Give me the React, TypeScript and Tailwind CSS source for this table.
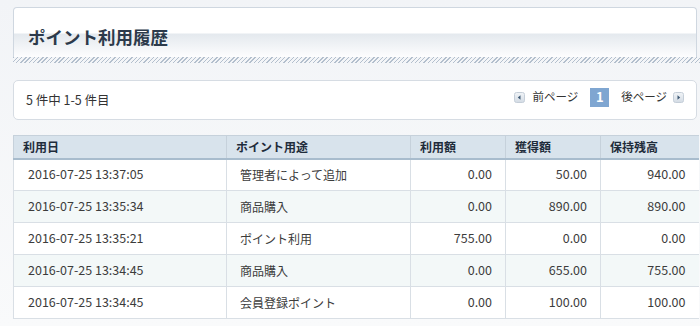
import React from 'react';

type Row = {
  date: string;
  usage: string;
  used: string;
  earned: string;
  balance: string;
};

const rows: Row[] = [
  { date: '2016-07-25 13:37:05', usage: '管理者によって追加', used: '0.00', earned: '50.00', balance: '940.00' },
  { date: '2016-07-25 13:35:34', usage: '商品購入', used: '0.00', earned: '890.00', balance: '890.00' },
  { date: '2016-07-25 13:35:21', usage: 'ポイント利用', used: '755.00', earned: '0.00', balance: '0.00' },
  { date: '2016-07-25 13:34:45', usage: '商品購入', used: '0.00', earned: '655.00', balance: '755.00' },
  { date: '2016-07-25 13:34:45', usage: '会員登録ポイント', used: '0.00', earned: '100.00', balance: '100.00' },
];

const ArrowButton = ({ dir }: { dir: 'left' | 'right' }) => (
  <svg width="11" height="11" viewBox="0 0 11 11" className="shrink-0">
    <defs>
      <linearGradient id={`ab-${dir}`} x1="0" y1="0" x2="0" y2="1">
        <stop offset="0" stopColor="#f1f4f7" />
        <stop offset="1" stopColor="#d3dbe4" />
      </linearGradient>
    </defs>
    <rect x="0.5" y="0.5" width="10" height="10" rx="2" fill={`url(#ab-${dir})`} stroke="#c5ced8" />
    {dir === 'left' ? (
      <path d="M6.5 3.2 L3.8 5.5 L6.5 7.8 Z" fill="#3d5873" />
    ) : (
      <path d="M4.5 3.2 L7.2 5.5 L4.5 7.8 Z" fill="#3d5873" />
    )}
  </svg>
);

const App = () => {
  return (
    <div
      className="w-[700px] h-[326px] overflow-hidden bg-[linear-gradient(to_bottom,#f2f4f7,#f9fafb)] pt-[7px] text-[#333]"
      style={{ fontFamily: '"Noto Sans CJK JP", "Noto Sans", sans-serif' }}
    >
      {/* title */}
      <div className="ml-[13px] mr-[3px] h-[50px] rounded-t-[4px] border border-b-0 border-[#cfd7e0] bg-[linear-gradient(to_bottom,#ffffff_0px,#ffffff_25px,#e4e9ee_26px,#fdfdfe_100%)] pl-[14px] pt-[18px]">
        <h2 className="text-[17.5px] font-bold leading-[22px] text-[#2c3a4b]">ポイント利用履歴</h2>
      </div>
      <div className="ml-[13px] h-[6px] bg-[repeating-linear-gradient(135deg,#b3bfcd_0px,#b3bfcd_1px,transparent_1px,transparent_3px)]" />

      {/* pager */}
      <div className="mt-[17px] ml-[13px] mr-[3px] flex h-[40px] items-center justify-between rounded-[5px] border border-[#d6dce3] bg-white pl-[12px] pr-[12px] text-[12px]">
        <span className="text-[12.5px] text-[#333]">5 件中 1-5 件目</span>
        <div className="flex items-center -mt-[6px]">
          <ArrowButton dir="left" />
          <span className="ml-[7px] text-[11.5px] text-[#333]">前ページ</span>
          <span className="ml-[12px] flex h-[19px] w-[19px] items-center justify-center bg-[#7fa6d1] text-[13px] font-bold text-white">1</span>
          <span className="ml-[12px] text-[11.5px] text-[#333]">後ページ</span>
          <span className="ml-[6px] flex">
            <ArrowButton dir="right" />
          </span>
        </div>
      </div>

      {/* table */}
      <table className="mt-[15px] ml-[13px] w-[685px] table-fixed border-collapse text-[12.5px]">
        <colgroup>
          <col className="w-[213px]" />
          <col className="w-[184px]" />
          <col className="w-[95px]" />
          <col className="w-[95px]" />
          <col className="w-[98px]" />
        </colgroup>
        <thead>
          <tr className="h-[23px] bg-[#d8e3ec] border-b-2 border-[#a8bccd] text-left text-[12px] text-[#1f2c3b]">
            <th className="border-l border-t border-[#c6d1db] pl-[9px] pt-[1px] font-bold">利用日</th>
            <th className="border-l border-t border-[#c6d1db] pl-[9px] pt-[1px] font-bold">ポイント用途</th>
            <th className="border-l border-t border-[#c6d1db] pl-[9px] pt-[1px] font-bold">利用額</th>
            <th className="border-l border-t border-[#c6d1db] pl-[9px] pt-[1px] font-bold">獲得額</th>
            <th className="border-l border-t border-[#c6d1db] pl-[9px] pt-[1px] font-bold">保持残高</th>
          </tr>
        </thead>
        <tbody className="text-[#3c3c3c]">
          {rows.map((row, i) => (
            <tr key={i} className={`h-[32px] ${i % 2 === 1 ? 'bg-[#f3f8f8]' : 'bg-white'}`}>
              <td className="border border-r-0 border-[#d9dfe5] pl-[14px]">{row.date}</td>
              <td className="border border-r-0 border-[#d9dfe5] pl-[13px] text-[12px]">{row.usage}</td>
              <td className="border border-r-0 border-[#d9dfe5] pr-[13px] text-right">{row.used}</td>
              <td className="border border-r-0 border-[#d9dfe5] pr-[13px] text-right">{row.earned}</td>
              <td className="border border-r-0 border-[#d9dfe5] pr-[13px] text-right">{row.balance}</td>
            </tr>
          ))}
        </tbody>
      </table>
    </div>
  );
};

export default App;
